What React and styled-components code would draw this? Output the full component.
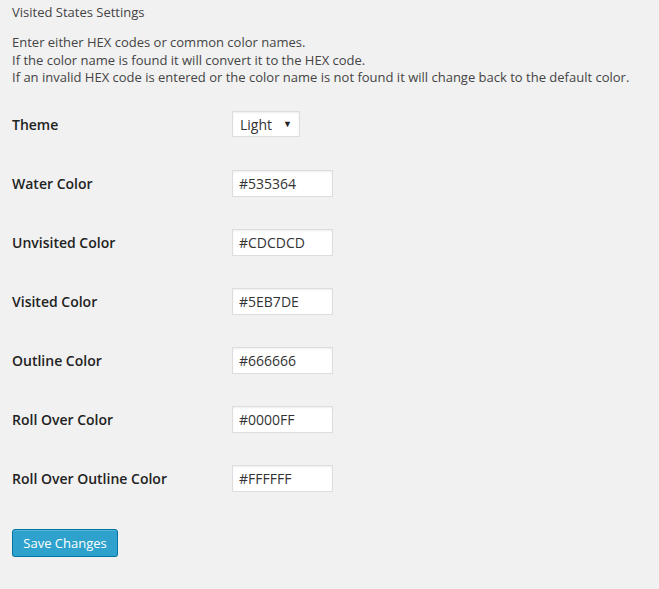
import React from 'react'
import styled, { createGlobalStyle } from 'styled-components'

const GlobalStyle = createGlobalStyle`
  html, body {
    margin: 0;
    background: #f1f1f1;
  }
  body {
    font-family: "Open Sans", "Liberation Sans", sans-serif;
    color: #444;
  }
`

const Page = styled.div`
  padding: 3px 12px 0 12px;
`

const Title = styled.h2`
  margin: 0;
  font-size: 13px;
  line-height: 18px;
  font-weight: 400;
  color: #444;
`

const Description = styled.p`
  margin: 13px 0 0 0;
  font-size: 13px;
  line-height: 17.5px;
`

const FormTable = styled.div`
  margin-top: 8px;
`

const Row = styled.div`
  display: grid;
  grid-template-columns: 220px auto;
  align-items: center;
  height: 59px;
`

const Label = styled.label`
  font-size: 14px;
  font-weight: 600;
  color: #222;
`

const SelectWrap = styled.div`
  position: relative;
  width: 68px;
`

const Select = styled.select`
  appearance: none;
  -webkit-appearance: none;
  width: 68px;
  height: 26px;
  box-sizing: border-box;
  padding: 0 0 0 7px;
  font-family: inherit;
  font-size: 14px;
  color: #333;
  background: #fff;
  border: 1px solid #ddd;
  border-radius: 0;
  box-shadow: inset 0 1px 2px rgba(0, 0, 0, 0.07);
  outline: none;
`

const Arrow = styled.span`
  position: absolute;
  right: 8px;
  top: 6px;
  font-size: 9px;
  color: #222;
  pointer-events: none;
`

const TextInput = styled.input`
  width: 101px;
  height: 27px;
  box-sizing: border-box;
  padding: 0 6px;
  font-family: inherit;
  font-size: 14px;
  color: #333;
  background: #fff;
  border: 1px solid #ddd;
  border-radius: 0;
  box-shadow: inset 0 1px 2px rgba(0, 0, 0, 0.07);
  outline: none;
`

const Submit = styled.button`
  margin-top: 21px;
  width: 106px;
  height: 28px;
  padding: 0;
  font-family: inherit;
  font-size: 13px;
  color: #fff;
  background: #2ea2cc;
  border: 1px solid #0074a2;
  border-radius: 3px;
  box-shadow: inset 0 1px 0 rgba(120, 200, 230, 0.5), 0 1px 0 rgba(0, 0, 0, 0.15);
  cursor: pointer;
`

const colorFields = [
  { label: 'Water Color', value: '#535364' },
  { label: 'Unvisited Color', value: '#CDCDCD' },
  { label: 'Visited Color', value: '#5EB7DE' },
  { label: 'Outline Color', value: '#666666' },
  { label: 'Roll Over Color', value: '#0000FF' },
  { label: 'Roll Over Outline Color', value: '#FFFFFF' },
]

export default function App () {
  return (
    <Page>
      <GlobalStyle />
      <Title>Visited States Settings</Title>
      <Description>
        Enter either HEX codes or common color names.<br />
        If the color name is found it will convert it to the HEX code.<br />
        If an invalid HEX code is entered or the color name is not found it will change back to the default color.
      </Description>
      <FormTable>
        <Row>
          <Label>Theme</Label>
          <SelectWrap>
            <Select defaultValue='light'>
              <option value='light'>Light</option>
              <option value='dark'>Dark</option>
            </Select>
            <Arrow>▼</Arrow>
          </SelectWrap>
        </Row>
        {colorFields.map(field => (
          <Row key={field.label}>
            <Label>{field.label}</Label>
            <TextInput type='text' defaultValue={field.value} />
          </Row>
        ))}
      </FormTable>
      <Submit>Save Changes</Submit>
    </Page>
  )
}
